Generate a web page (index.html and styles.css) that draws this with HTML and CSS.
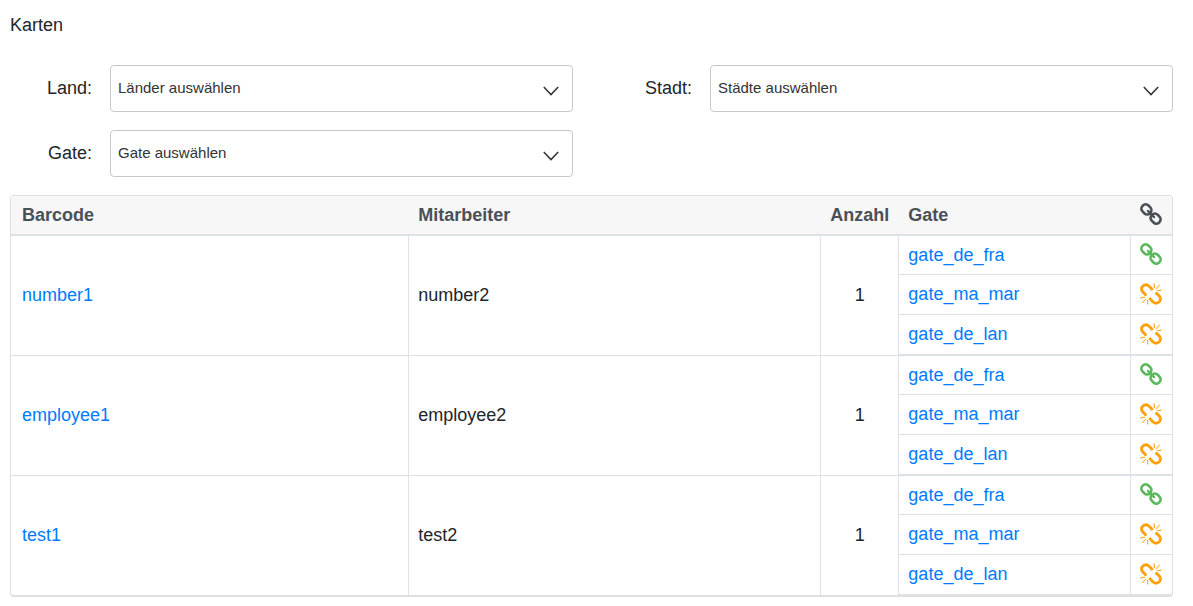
FILE: index.html
```html
<!DOCTYPE html>
<html lang="de">
<head>
<meta charset="utf-8">
<title>Karten</title>
<link rel="stylesheet" href="styles.css">
</head>
<body>
<svg class="sprite" aria-hidden="true">
  <symbol id="link" viewBox="0 0 22 22">
    <g fill="none" stroke="currentColor" stroke-width="2.600">
      <rect x="1.200" y="2.200" width="10.400" height="8.400" rx="3.900" transform="rotate(45 6.400 6.400)"/>
      <rect x="10.400" y="11.400" width="10.400" height="8.400" rx="3.900" transform="rotate(45 15.600 15.600)"/>
      <path stroke-linecap="round" stroke-width="2.200" d="M7.900 7.900L14.100 14.100"/>
    </g>
  </symbol>
  <symbol id="unlink" viewBox="0 0 22 22">
    <g fill="none" stroke="currentColor">
      <path stroke-width="2.800" d="M6.400 12.600L2.600 8.800Q.4 5.800 2.700 3.200Q5.400 .7 8.400 2.600L12.800 7M15.600 9.400L19.400 13.200Q21.600 16.200 19.300 18.800Q16.600 21.300 13.600 19.400L9.200 15"/>
      <path stroke-width="1" d="M14 .4L14.600 5M19.800 2L15.600 6.200M22 7L17 7.800M8 21.600L7.400 17M2.200 20L6.400 15.800M0 15L5 14.200"/>
    </g>
  </symbol>
  <symbol id="chevron" viewBox="0 0 16 10">
    <path fill="none" stroke="currentColor" stroke-width="1.500" d="M.8 1L8 8.600L15.200 1"/>
  </symbol>
</svg>

<main class="page">
  <h1 class="title">Karten</h1>

  <form class="filters">
    <div class="field">
      <label for="land">Land:</label>
      <div class="picker">
        <select id="land"><option>Länder auswählen</option></select>
        <svg class="chevron" aria-hidden="true"><use href="#chevron"/></svg>
      </div>
    </div>
    <div class="field">
      <label for="stadt">Stadt:</label>
      <div class="picker">
        <select id="stadt"><option>Städte auswählen</option></select>
        <svg class="chevron" aria-hidden="true"><use href="#chevron"/></svg>
      </div>
    </div>
    <div class="field">
      <label for="gate">Gate:</label>
      <div class="picker">
        <select id="gate"><option>Gate auswählen</option></select>
        <svg class="chevron" aria-hidden="true"><use href="#chevron"/></svg>
      </div>
    </div>
  </form>

  <div class="card">
    <table class="cards-table">
      <colgroup>
        <col class="col-barcode"><col class="col-employee"><col class="col-count"><col><col class="col-status">
      </colgroup>
      <thead>
        <tr>
          <th>Barcode</th><th>Mitarbeiter</th><th>Anzahl</th><th>Gate</th>
          <th class="status"><svg class="icon" aria-hidden="true"><use href="#link"/></svg></th>
        </tr>
      </thead>
      <tbody>
        <tr class="first">
          <td rowspan="3"><a href="#">number1</a></td><td rowspan="3">number2</td><td rowspan="3" class="count">1</td>
          <td><a href="#">gate_de_fra</a></td><td class="status linked"><svg class="icon" aria-hidden="true"><use href="#link"/></svg></td>
        </tr>
        <tr><td><a href="#">gate_ma_mar</a></td><td class="status broken"><svg class="icon" aria-hidden="true"><use href="#unlink"/></svg></td></tr>
        <tr class="last"><td><a href="#">gate_de_lan</a></td><td class="status broken"><svg class="icon" aria-hidden="true"><use href="#unlink"/></svg></td></tr>
      </tbody>
      <tbody>
        <tr class="first">
          <td rowspan="3"><a href="#">employee1</a></td><td rowspan="3">employee2</td><td rowspan="3" class="count">1</td>
          <td><a href="#">gate_de_fra</a></td><td class="status linked"><svg class="icon" aria-hidden="true"><use href="#link"/></svg></td>
        </tr>
        <tr><td><a href="#">gate_ma_mar</a></td><td class="status broken"><svg class="icon" aria-hidden="true"><use href="#unlink"/></svg></td></tr>
        <tr class="last"><td><a href="#">gate_de_lan</a></td><td class="status broken"><svg class="icon" aria-hidden="true"><use href="#unlink"/></svg></td></tr>
      </tbody>
      <tbody>
        <tr class="first">
          <td rowspan="3"><a href="#">test1</a></td><td rowspan="3">test2</td><td rowspan="3" class="count">1</td>
          <td><a href="#">gate_de_fra</a></td><td class="status linked"><svg class="icon" aria-hidden="true"><use href="#link"/></svg></td>
        </tr>
        <tr><td><a href="#">gate_ma_mar</a></td><td class="status broken"><svg class="icon" aria-hidden="true"><use href="#unlink"/></svg></td></tr>
        <tr class="last"><td><a href="#">gate_de_lan</a></td><td class="status broken"><svg class="icon" aria-hidden="true"><use href="#unlink"/></svg></td></tr>
      </tbody>
    </table>
  </div>
</main>
</body>
</html>
```

FILE: styles.css
```css
* {
  box-sizing: border-box;
}

body {
  margin: 0;
  background: #fff;
  color: #212529;
  font: 18px/27px "Liberation Sans", Arial, sans-serif;
}

.sprite {
  position: absolute;
  width: 0;
  height: 0;
}

.page {
  padding: 12px 20px 9px 10px;
}

.title {
  margin: 0 0 26px;
  font-size: 18px;
  font-weight: 400;
}

.filters {
  display: grid;
  grid-template-columns: 1fr 1fr;
  gap: 18px 37px;
  margin-bottom: 18px;
}

.field {
  display: grid;
  grid-template-columns: 82px 1fr;
  column-gap: 18px;
  align-items: center;
}

.field label {
  text-align: right;
}

.picker {
  position: relative;
}

.picker select {
  display: block;
  width: 100%;
  height: 47px;
  padding: 0 40px 2px 7px;
  border: 1px solid #c8c8c8;
  border-radius: 4px;
  background: #fff;
  color: #333;
  font: 15px "Liberation Sans", Arial, sans-serif;
  appearance: none;
}

.chevron {
  position: absolute;
  top: 21px;
  right: 14px;
  width: 16px;
  height: 10px;
  color: #333;
  pointer-events: none;
}

.card {
  border: 1px solid #dfdfdf;
  border-bottom-width: 2px;
  border-radius: 4px;
}

.cards-table {
  width: 100%;
  table-layout: fixed;
  border-collapse: separate;
  border-spacing: 0;
}

.col-barcode {
  width: 34.3%;
}

.col-employee {
  width: 35.5%;
}

.col-count {
  width: 78px;
}

.col-status {
  width: 41px;
}

th,
td {
  padding: 0 9px;
  text-align: left;
  vertical-align: middle;
}

th {
  height: 40px;
  border-bottom: 2px solid #dee2e6;
  background: #f7f7f7;
  color: #495057;
}

td {
  height: 40px;
  border-right: 1px solid #dee2e6;
  border-bottom: 1px solid #dee2e6;
}

th:first-child,
td[rowspan]:first-child {
  padding-left: 11px;
}

.first td {
  height: 39px;
}

.last td {
  height: 41px;
  border-bottom-width: 2px;
}

tbody:last-child .last td {
  height: 40px;
  border-bottom-width: 1px;
}

tbody:last-child td[rowspan] {
  border-bottom: 0;
}

td.count {
  padding: 0;
  text-align: center;
}

th.status,
td.status {
  padding: 0 2px 2px 0;
  border-right: 0;
  text-align: center;
}

.icon {
  display: block;
  width: 22px;
  height: 22px;
  margin: 0 auto;
}

.linked {
  color: #5cb85c;
}

.broken {
  color: #ff9f0a;
}

a {
  color: #007bff;
  text-decoration: none;
}
```
